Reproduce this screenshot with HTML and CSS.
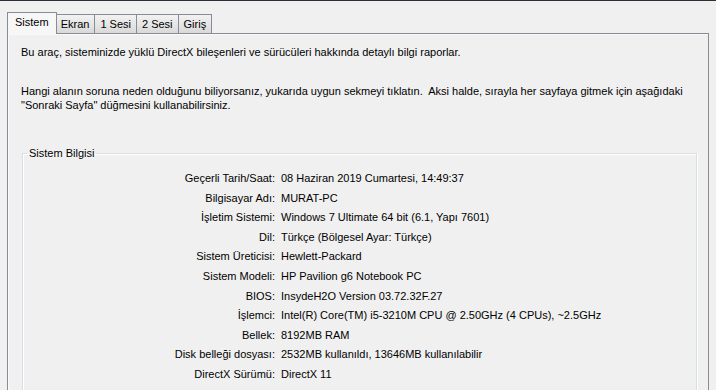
FILE: index.html
```html
<!DOCTYPE html>
<html lang="tr">

<head>
    <meta charset="UTF-8">
    <title>DirectX Tanı Aracı</title>
    <link rel="stylesheet" href="styles.css">
</head>

<body>
    <div class="topLine"></div>
    <div class="tabs">
        <div class="tab active">Sistem</div>
        <div class="tab">Ekran</div>
        <div class="tab">1 Sesi</div>
        <div class="tab">2 Sesi</div>
        <div class="tab">Giriş</div>
    </div>
    <div class="page">
        <p class="intro">Bu araç, sisteminizde yüklü DirectX bileşenleri ve sürücüleri hakkında detaylı bilgi raporlar.</p>
        <p class="help">Hangi alanın soruna neden olduğunu biliyorsanız, yukarıda uygun sekmeyi tıklatın.&nbsp; Aksi halde, sırayla her sayfaya gitmek için aşağıdaki<br>"Sonraki Sayfa" düğmesini kullanabilirsiniz.</p>

        <fieldset class="group">
            <legend>Sistem Bilgisi</legend>
            <div class="info">
                <span class="label">Geçerli Tarih/Saat:</span><span>08 Haziran 2019 Cumartesi, 14:49:37</span>
                <span class="label">Bilgisayar Adı:</span><span>MURAT-PC</span>
                <span class="label">İşletim Sistemi:</span><span>Windows 7 Ultimate 64 bit (6.1, Yapı 7601)</span>
                <span class="label">Dil:</span><span>Türkçe (Bölgesel Ayar: Türkçe)</span>
                <span class="label">Sistem Üreticisi:</span><span>Hewlett-Packard</span>
                <span class="label">Sistem Modeli:</span><span>HP Pavilion g6 Notebook PC</span>
                <span class="label">BIOS:</span><span>InsydeH2O Version 03.72.32F.27</span>
                <span class="label">İşlemci:</span><span>Intel(R) Core(TM) i5-3210M CPU @ 2.50GHz (4 CPUs), ~2.5GHz</span>
                <span class="label">Bellek:</span><span>8192MB RAM</span>
                <span class="label">Disk belleği dosyası:</span><span>2532MB kullanıldı, 13646MB kullanılabilir</span>
                <span class="label">DirectX Sürümü:</span><span>DirectX 11</span>
            </div>
        </fieldset>
    </div>
</body>

</html>
```

FILE: styles.css
```css
body {
    margin: 0;
    height: 390px;
    overflow: hidden;
    background-color: #f0f0f0;
    font-family: "Liberation Sans", Arial, sans-serif;
    font-size: 11px;
    color: #000;
}

.topLine {
    height: 1px;
    background-color: #2a3039;
}

.tabs {
    display: flex;
    align-items: flex-end;
    height: 32px;
    padding-left: 7px;
    box-sizing: border-box;
}

.tab {
    height: 18px;
    line-height: 18px;
    padding: 0 5px;
    margin-left: -1px;
    border: 1px solid #898c95;
    border-bottom: none;
    background: linear-gradient(#f2f2f2, #e6e6e6 50%, #d9d9d9);
}

.tab:first-child {
    margin-left: 0;
}

.tab.active {
    position: relative;
    z-index: 1;
    height: 21px;
    line-height: 19px;
    margin-bottom: -1px;
    margin-right: -1px;
    padding: 0 7px;
    background: #f7f7f7;
}

.page {
    margin: 0 7px;
    height: 400px;
    border: 1px solid #898c95;
    box-shadow: inset 1px 1px 0 #fafafa;
    padding: 0 13px;
}

.intro {
    margin: 12px 0 0;
}

.help {
    margin: 26px 0 0;
    line-height: 14px;
}

.group {
    margin: 35px 0 0 1px;
    width: 675px;
    box-sizing: border-box;
    border: 1px solid #d5dfe5;
    box-shadow: inset 1px 1px 0 #fff, 1px 1px 0 #fff;
    padding: 10px 0 30px;
}

.group legend {
    padding: 0 2px;
    margin-left: 4px;
}

.info {
    display: grid;
    grid-template-columns: 252px auto;
    column-gap: 6px;
    line-height: 19.6px;
}

.label {
    text-align: right;
}
```
